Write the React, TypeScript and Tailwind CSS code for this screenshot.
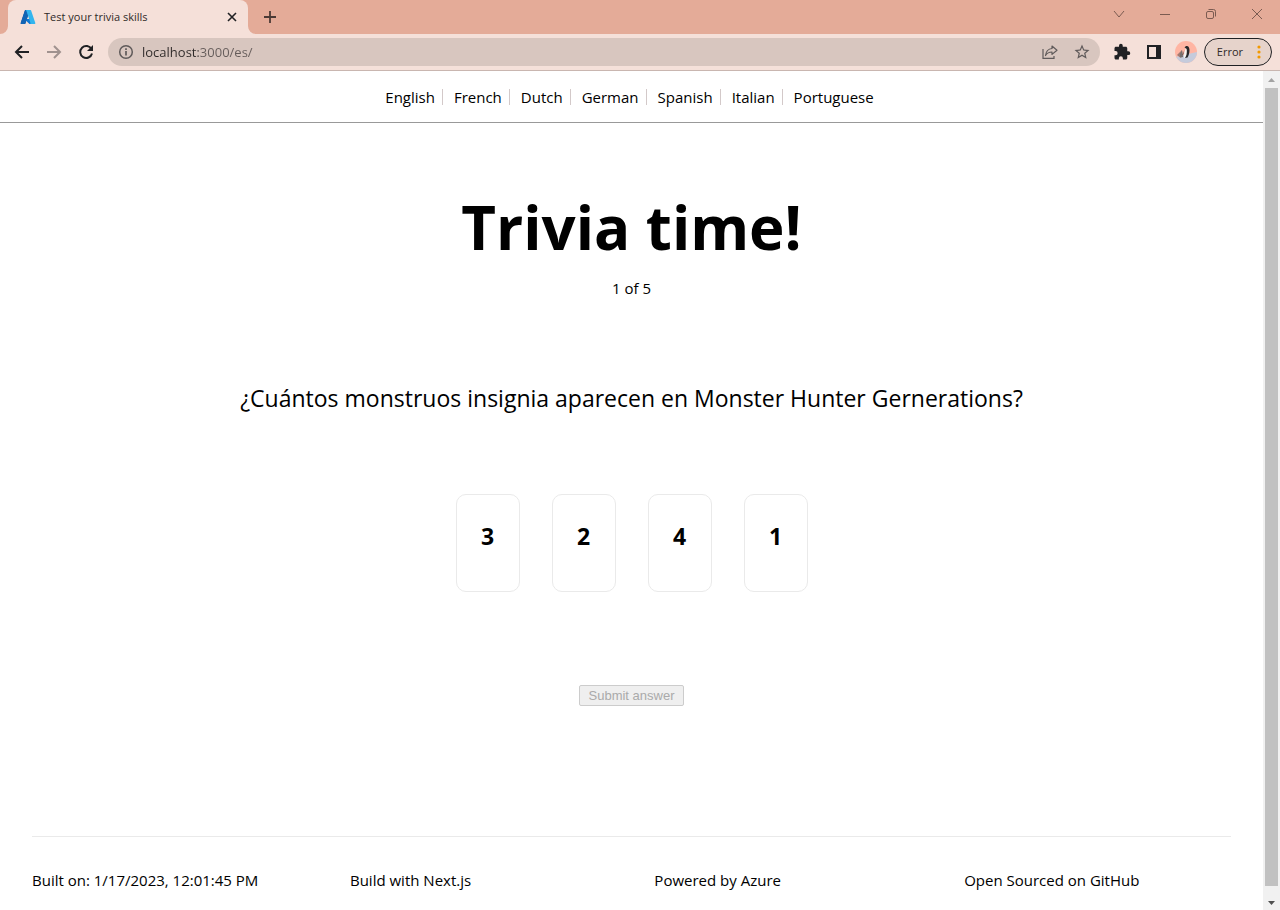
import { useState } from "react";

const languages = ["English", "French", "Dutch", "German", "Spanish", "Italian", "Portuguese"];
const answers = ["3", "2", "4", "1"];

function AzureLogo() {
  return (
    <svg viewBox="0 0 96 96" className="size-4 shrink-0" aria-hidden="true">
      <path fill="#12549f" d="M33.3 6.5h26.1L32.3 86.8a4.2 4.2 0 0 1-3.9 2.8H8.1a4.2 4.2 0 0 1-3.9-5.5L29.4 9.4a4.2 4.2 0 0 1 3.9-2.9Z" />
      <path fill="#0f78d4" d="M71.2 60.3H29.9a1.9 1.9 0 0 0-1.3 3.3l26.5 24.8a4.2 4.2 0 0 0 2.9 1.1h23.4Z" />
      <path fill="#1264b4" d="M33.3 6.5a4.1 4.1 0 0 0-4 2.9L4.3 84a4.2 4.2 0 0 0 3.9 5.6h20.700a4.400 4.400 0 0 0 3.400-2.900L59.400 6.500Z" />
      <path fill="#33b5ee" d="M66.6 9.4a4.2 4.2 0 0 0-3.9-2.9h-29a4.2 4.2 0 0 1 3.9 2.9l25.2 74.7a4.2 4.2 0 0 1-4 5.5h29.1a4.2 4.2 0 0 0 4-5.5Z" />
    </svg>
  );
}

function TabStrip() {
  return (
    <div className="flex h-[34px] items-stretch bg-[#e4ab98]">
      <svg viewBox="0 0 8 34" className="h-[34px] w-2 shrink-0" aria-hidden="true">
        <path d="M8 26v8H0a8 8 0 0 0 8-8Z" fill="#f5e0d9" />
      </svg>
      <div className="flex w-60 items-center rounded-t-lg bg-[#f5e0d9] pr-2 pl-3">
        <AzureLogo />
        <span className="ml-2 flex-1 text-[11px] leading-4 text-[#302a28]">Test your trivia skills</span>
        <button type="button" aria-label="Close tab" className="flex size-4 items-center justify-center">
          <svg viewBox="0 0 16 16" className="size-4" fill="none" stroke="#202124" strokeWidth="1.6" aria-hidden="true">
            <path d="m4 4 8 8m0-8-8 8" />
          </svg>
        </button>
      </div>
      <svg viewBox="0 0 8 34" className="h-[34px] w-2 shrink-0" aria-hidden="true">
        <path d="M0 26v8h8a8 8 0 0 1-8-8Z" fill="#f5e0d9" />
      </svg>
      <button type="button" aria-label="New tab" className="flex w-7 items-center justify-center">
        <svg viewBox="0 0 16 16" className="size-4" fill="none" stroke="#4b3a36" strokeWidth="1.8" aria-hidden="true">
          <path d="M8 2v12M2 8h12" />
        </svg>
      </button>
      <div className="ml-auto flex h-7 text-[#7b5b51]">
        <button type="button" aria-label="Search tabs" className="flex w-[46px] items-center justify-center">
          <svg viewBox="0 0 12 12" className="size-3" fill="none" stroke="currentColor" aria-hidden="true">
            <path d="m1 3 5 6 5-6" />
          </svg>
        </button>
        <button type="button" aria-label="Minimize" className="flex w-[46px] items-center justify-center">
          <svg viewBox="0 0 12 12" className="size-3" fill="none" stroke="currentColor" aria-hidden="true">
            <path d="M1 6.500h10" />
          </svg>
        </button>
        <button type="button" aria-label="Restore" className="flex w-[46px] items-center justify-center">
          <svg viewBox="0 0 12 12" className="size-3" fill="none" stroke="currentColor" aria-hidden="true">
            <rect x="1.500" y="3.500" width="7" height="7" rx="1.500" />
            <path d="M3.500 1.500h5a2 2 0 0 1 2 2v5" />
          </svg>
        </button>
        <button type="button" aria-label="Close window" className="flex w-[46px] items-center justify-center">
          <svg viewBox="0 0 12 12" className="size-3" fill="none" stroke="currentColor" aria-hidden="true">
            <path d="m1 1 10 10m0-10L1 11" />
          </svg>
        </button>
      </div>
    </div>
  );
}

function Toolbar() {
  return (
    <div className="flex h-[37px] items-center border-b border-[#c9b6b0] bg-[#f5e0d9] pr-2 pl-3">
      <div className="flex gap-3">
        <button type="button" aria-label="Back" className="size-5">
          <svg viewBox="0 0 20 20" className="size-5" fill="none" stroke="#202124" strokeWidth="2" aria-hidden="true">
            <path d="M17 10H4m6-6-6 6 6 6" />
          </svg>
        </button>
        <button type="button" aria-label="Forward" className="size-5">
          <svg viewBox="0 0 20 20" className="size-5" fill="none" stroke="#a0928f" strokeWidth="2" aria-hidden="true">
            <path d="M3 10h13m-6-6 6 6-6 6" />
          </svg>
        </button>
        <button type="button" aria-label="Reload" className="size-5">
          <svg viewBox="0 0 20 20" className="size-5" fill="none" stroke="#202124" strokeWidth="2" aria-hidden="true">
            <path d="M15.500 7.200A6 6 0 1 0 16 11.500" />
            <path d="M17 3v6h-6Z" fill="#202124" stroke="none" />
          </svg>
        </button>
      </div>
      <div className="ml-3 flex h-7 flex-1 items-center rounded-full bg-[#d8c6bf] pr-[9px] pl-2.5 text-[#5f5a5a]">
        <svg viewBox="0 0 16 16" className="size-4 shrink-0" fill="none" stroke="currentColor" strokeWidth="1.500" aria-hidden="true">
          <circle cx="8" cy="8" r="6.300" />
          <path d="M8 7v4.500M8 4.300v1.600" strokeWidth="1.700" />
        </svg>
        <input
          aria-label="Address"
          defaultValue="localhost:3000/es/"
          className="ml-2 min-w-0 flex-1 bg-[linear-gradient(to_right,#2f2a29_56px,#655c5a_56px)] bg-clip-text text-[13px] text-transparent caret-black outline-none"
        />
        <button type="button" aria-label="Share this page" className="size-4">
          <svg viewBox="0 0 16 16" className="size-4" fill="none" stroke="currentColor" strokeWidth="1.200" aria-hidden="true">
            <path d="M1 5v9.400h11V12" />
            <path d="M10 2l5 4.200-5 4.200V8C7 8 5 9 3.500 11.500 4 7.500 6.500 4.800 10 4.500Z" strokeLinejoin="round" />
          </svg>
        </button>
        <button type="button" aria-label="Bookmark this tab" className="ml-[15px] size-[18px]">
          <svg viewBox="0 0 24 24" className="size-[18px]" fill="currentColor" aria-hidden="true">
            <path d="m22 9.240-7.190-.62L12 2 9.190 8.630 2 9.240l5.460 4.730L5.820 21 12 17.270 18.180 21l-1.630-7.030L22 9.240ZM12 15.400l-3.760 2.270 1-4.280-3.320-2.880 4.380-.38L12 6.100l1.710 4.040 4.380.38-3.320 2.880 1 4.280L12 15.400Z" />
          </svg>
        </button>
      </div>
      <button type="button" aria-label="Extensions" className="ml-[13px] size-[18px]">
        <svg viewBox="0 0 24 24" className="size-[18px]" fill="#202124" aria-hidden="true">
          <path d="M20.500 11H19V7c0-1.100-.9-2-2-2h-4V3.500a2.500 2.500 0 0 0-5 0V5H4c-1.100 0-2 .9-2 2v3.800h1.500a2.700 2.700 0 0 1 0 5.400H2V20c0 1.100.9 2 2 2h3.800v-1.500a2.700 2.700 0 0 1 5.400 0V22H17c1.100 0 2-.9 2-2v-4h1.500a2.500 2.500 0 0 0 0-5Z" />
        </svg>
      </button>
      <button type="button" aria-label="Side panel" className="ml-4 size-3.5">
        <svg viewBox="0 0 14 14" className="size-3.5" aria-hidden="true">
          <path fill="#202124" fillRule="evenodd" d="M0 0h14v14H0ZM2 2v10h7V2Z" />
        </svg>
      </button>
      <button type="button" aria-label="Profile" className="ml-3.5 size-[22px]">
        <svg viewBox="0 0 22 22" className="size-[22px]" aria-hidden="true">
          <clipPath id="avatar"><circle cx="11" cy="11" r="11" /></clipPath>
          <g clipPath="url(#avatar)">
            <path fill="#ffb5a3" d="M0 0h22v22H0Z" />
            <path fill="#c5cbdc" d="M0 16l22-5v11H0Z" />
            <path fill="#a07a72" d="M2 14l5-5 1 7-3 .5Z" />
            <path fill="#77706f" d="M5 13l2-4 1 7-3 .5Z" />
            <path fill="#f8f5f2" d="M9 17c0-3 0-6 1.500-9L13 6l1 3-2 7Z" />
            <path fill="#27282b" d="M9.500 6.500 11 5c2-.6 3.500 1 3.500 4s-.8 5.500-2 7.500L10 17c1.500-2 2-5 1.800-8-.1-1.500-.8-2-2.300-2.500Z" />
            <path fill="#27282b" d="M9.500 9 8 14l-.5-.5Z" />
          </g>
        </svg>
      </button>
      <button type="button" className="ml-[7px] flex h-7 items-center rounded-full border border-[#202124] bg-[#e6d3cb] pr-2 pl-3 text-[11px] text-[#302a28]">
        Error
        <svg viewBox="0 0 8 16" className="ml-3 h-4 w-2" fill="#f29900" aria-hidden="true">
          <circle cx="4" cy="3" r="1.600" />
          <circle cx="4" cy="8" r="1.600" />
          <circle cx="4" cy="13" r="1.600" />
        </svg>
      </button>
    </div>
  );
}

function ScrollRail() {
  return (
    <div className="flex w-[17px] shrink-0 flex-col bg-[#f1f1f1]" aria-hidden="true">
      <svg viewBox="0 0 17 17" className="size-[17px]" fill="#a3a3a3"><path d="m5 11 3.500-4 3.500 4Z" /></svg>
      <div className="mr-0.5 ml-0.5 flex-1 bg-[#c1c1c1]" />
      <svg viewBox="0 0 17 24" className="h-6 w-[17px]" fill="#505050"><path d="m5 15 3.500 4 3.500-4Z" /></svg>
    </div>
  );
}

export default function App() {
  const [picked, setPicked] = useState<string | null>(null);

  return (
    <div className="flex min-h-screen flex-col bg-white font-['Open_Sans','Noto_Sans',sans-serif] text-[15px] leading-6 text-black">
      <header>
        <TabStrip />
        <Toolbar />
      </header>
      <div className="flex flex-1">
        <div className="flex min-w-0 flex-1 flex-col">
          <nav className="flex justify-center border-b border-[#999999] pt-3.5 pr-1 pb-[13px]">
            <ul className="flex">
              {languages.map((name, i) => (
                <li key={name} className="flex items-center">
                  {i > 0 && <span className="mr-[11px] ml-[7px] h-4 w-px bg-[#d3c9c9]" />}
                  <a href="#">{name}</a>
                </li>
              ))}
            </ul>
          </nav>
          <main className="flex flex-1 flex-col items-center pt-16">
            <h1 className="text-[60px] leading-[80px] font-bold">Trivia time!</h1>
            <p className="mt-[9px]">1 of 5</p>
            <p className="mt-20 text-[23px] leading-9">¿Cuántos monstruos insignia aparecen en Monster Hunter Gernerations?</p>
            <div className="mt-[78px] flex gap-8">
              {answers.map((answer) => (
                <button
                  key={answer}
                  type="button"
                  onClick={() => setPicked(answer)}
                  className="flex h-[98px] w-16 justify-center rounded-[10px] border border-[#eaeaea] pt-[23px] text-[23px] leading-9 font-bold"
                >
                  {answer}
                </button>
              ))}
            </div>
            <button
              type="button"
              disabled={picked === null}
              className="mt-[93px] h-[21px] rounded-[2px] border border-[#767676] bg-[#efefef] px-[9px] font-['Liberation_Sans',Arial,sans-serif] text-[13px] leading-4 disabled:border-[#cccccc] disabled:text-[#aaaaaa]"
            >
              Submit answer
            </button>
          </main>
          <footer className="mx-8 flex border-t border-[#eaeaea] pt-[31px] pb-[18px]">
            <span>Built on: 1/17/2023, 12:01:45 PM</span>
            <a href="#" className="flex-auto text-center">Build with Next.js</a>
            <a href="#" className="flex-auto text-center">Powered by Azure</a>
            <a href="#" className="flex-auto text-center">Open Sourced on GitHub</a>
          </footer>
        </div>
        <ScrollRail />
      </div>
    </div>
  );
}
